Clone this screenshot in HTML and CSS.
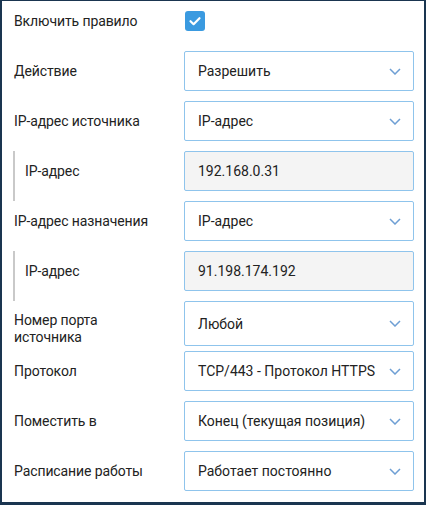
FILE: index.html
```html
<!DOCTYPE html>
<html lang="ru">
<head>
<meta charset="utf-8">
<title>Правило</title>
<link rel="stylesheet" href="styles.css">
</head>
<body>
<div class="panel">
  <div class="row">
    <div class="label">Включить правило</div>
    <div class="field"><span class="check"><svg viewBox="0 0 20 20" width="20" height="20"><path d="M5.5 10.2 8.6 13.2 14.5 7.2" fill="none" stroke="#fff" stroke-width="2.2" stroke-linecap="round" stroke-linejoin="round"/></svg></span></div>
  </div>
  <div class="row">
    <div class="label">Действие</div>
    <div class="select">Разрешить<svg class="chev" viewBox="0 0 12 7" width="12" height="7"><path d="M1 1l5 5 5-5" fill="none" stroke="#6e9fd4" stroke-width="1.5"/></svg></div>
  </div>
  <div class="row">
    <div class="label">IP-адрес источника</div>
    <div class="select">IP-адрес<svg class="chev" viewBox="0 0 12 7" width="12" height="7"><path d="M1 1l5 5 5-5" fill="none" stroke="#6e9fd4" stroke-width="1.5"/></svg></div>
  </div>
  <div class="row">
    <div class="label sub">IP-адрес</div>
    <div class="input">192.168.0.31</div>
  </div>
  <div class="row">
    <div class="label">IP-адрес назначения</div>
    <div class="select">IP-адрес<svg class="chev" viewBox="0 0 12 7" width="12" height="7"><path d="M1 1l5 5 5-5" fill="none" stroke="#6e9fd4" stroke-width="1.5"/></svg></div>
  </div>
  <div class="row">
    <div class="label sub">IP-адрес</div>
    <div class="input">91.198.174.192</div>
  </div>
  <div class="row">
    <div class="label multi">Номер порта<br>источника</div>
    <div class="select">Любой<svg class="chev" viewBox="0 0 12 7" width="12" height="7"><path d="M1 1l5 5 5-5" fill="none" stroke="#6e9fd4" stroke-width="1.5"/></svg></div>
  </div>
  <div class="row">
    <div class="label">Протокол</div>
    <div class="select">TCP/443 - Протокол HTTPS<svg class="chev" viewBox="0 0 12 7" width="12" height="7"><path d="M1 1l5 5 5-5" fill="none" stroke="#6e9fd4" stroke-width="1.5"/></svg></div>
  </div>
  <div class="row">
    <div class="label">Поместить в</div>
    <div class="select">Конец (текущая позиция)<svg class="chev" viewBox="0 0 12 7" width="12" height="7"><path d="M1 1l5 5 5-5" fill="none" stroke="#6e9fd4" stroke-width="1.5"/></svg></div>
  </div>
  <div class="row">
    <div class="label">Расписание работы</div>
    <div class="select">Работает постоянно<svg class="chev" viewBox="0 0 12 7" width="12" height="7"><path d="M1 1l5 5 5-5" fill="none" stroke="#6e9fd4" stroke-width="1.5"/></svg></div>
  </div>
</div>
</body>
</html>
```
FILE: styles.css
```css
* { box-sizing: border-box; }
html, body { margin: 0; padding: 0; background: #1a3550; }
body {
  font-family: Roboto, "Noto Sans", "Liberation Sans", sans-serif;
  font-size: 14px;
  color: #222;
}
.panel {
  width: 426px;
  height: 505px;
  border-style: solid;
  border-color: #1a3550;
  border-width: 1px 2px 3px 2px;
  background: #fff;
  padding: 0 10px 0 11px;
  display: flex;
  flex-direction: column;
  gap: 10px;
}
.row {
  display: grid;
  grid-template-columns: 1fr 230px;
  height: 40px;
}
.label {
  display: flex;
  align-items: center;
  padding-left: 1px;
  line-height: 17px;
  letter-spacing: -0.1px;
}
.label.multi {
  display: block;
  padding-top: 11px;
}
.label.sub {
  border-left: 2px solid #c9c9c9;
  padding-left: 10px;
  margin-bottom: -10px;
  padding-bottom: 10px;
}
.field {
  display: flex;
  align-items: center;
}
.check {
  width: 20px;
  height: 20px;
  margin-left: 1px;
  border-radius: 3px;
  background: #3a9ae0;
  display: block;
}
.check svg { display: block; }
.select, .input {
  border: 1px solid #8fc4ec;
  border-radius: 2px;
  display: flex;
  align-items: center;
  padding: 0 12px 0 13px;
  white-space: nowrap;
}
.select { background: #fff; justify-content: space-between; }
.input { background: #f4f4f4; }
.chev { display: block; flex: none; }
```
